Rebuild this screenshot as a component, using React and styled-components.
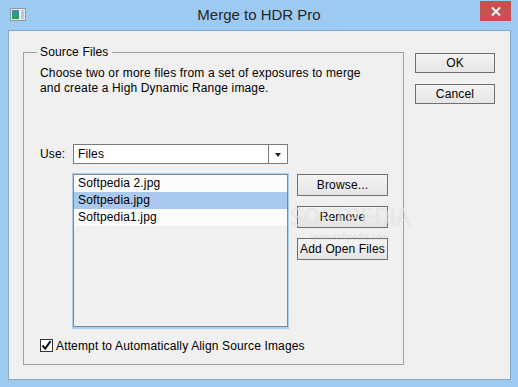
import React from 'react';
import styled, { createGlobalStyle } from 'styled-components';

const Global = createGlobalStyle`
  html, body { margin: 0; padding: 0; }
  body {
    width: 518px; height: 387px; overflow: hidden;
    font-family: "Liberation Sans", Arial, sans-serif;
    font-size: 12px; color: #000; letter-spacing: 0.15px;
  }
`;

const Window = styled.div`
  width: 518px; height: 387px; box-sizing: border-box;
  background: #9ccaf1;
  display: flex; flex-direction: column;
`;

const TitleBar = styled.div`
  height: 30px; flex: 0 0 30px;
  display: grid; grid-template-columns: 1fr auto 1fr; align-items: start;
`;

const AppIcon = styled.div`
  padding: 8px 0 0 10px; display: flex;
`;

const Title = styled.div`
  font-size: 15px; line-height: 30px; color: #262626; letter-spacing: 0;
`;

const CloseBtn = styled.div`
  justify-self: end; margin: 1px 7px 0 0;
  width: 31px; height: 20px; background: #c75050;
  display: flex; align-items: center; justify-content: center;
`;

const Client = styled.div`
  flex: 1; position: relative;
  margin: 0 7px 7px 8px; box-sizing: border-box;
  background: #f0f0f0; border: 1px solid #86a9ca;
  display: flex; gap: 11px;
  padding: 21px 15px 14px 14px;
`;

const GroupBox = styled.div`
  position: relative; box-sizing: border-box;
  flex: 0 0 381px; border: 1px solid #a0a0a0;
  display: flex; flex-direction: column;
  padding: 13px 0 0 16px;
`;

const Legend = styled.div`
  position: absolute; top: -8px; left: 13px;
  padding: 0 3px; background: #f0f0f0; line-height: 15px;
`;

const Description = styled.p`
  margin: 0; line-height: 15px;
`;

const UseRow = styled.div`
  margin-top: 48px; height: 20px;
  display: flex; align-items: center;
`;

const UseLabel = styled.span`
  width: 33px;
`;

const Select = styled.div`
  width: 215px; height: 20px; box-sizing: border-box;
  border: 1px solid #7a7a7a; background: #fff;
  display: flex;
`;

const SelectValue = styled.div`
  flex: 1; padding-left: 4px; line-height: 18px;
`;

const SelectArrow = styled.div`
  width: 18px; border-left: 1px solid #7a7a7a;
  display: flex; align-items: center; justify-content: center;
  &::after {
    content: ""; border-left: 3.5px solid transparent; border-right: 3.5px solid transparent;
    border-top: 4px solid #222; margin-top: 1px;
  }
`;

const ListRow = styled.div`
  margin-top: 10px; padding-left: 33px;
  display: flex; gap: 9px; align-items: flex-start;
`;

const List = styled.div`
  width: 215px; height: 153px; box-sizing: border-box;
  border: 1px solid #828790; background: #f0f0f0;
  box-shadow: 0 0 0 1px #a9cdef, 0 1px 0 1px #a9cdef;
`;

const Row = styled.div`
  height: 17px; line-height: 17px; padding-left: 4px;
  background: ${p => (p.$selected ? '#aac9ef' : '#fbfbfb')};
`;

const ButtonColumn = styled.div`
  display: flex; flex-direction: column; gap: ${p => p.$gap}px;
  margin-top: ${p => p.$top || 0}px;
`;

const Button = styled.div`
  width: ${p => p.$w}px; height: ${p => p.$h}px; box-sizing: border-box;
  border: 1px solid #707070;
  background: linear-gradient(#f3f3f3, #e5e5e5);
  display: flex; align-items: center; justify-content: center;
  font-size: 12px;
`;

const CheckRow = styled.div`
  margin-top: 11px; height: 15px;
  display: flex; align-items: center; gap: 3px;
`;

const CheckBox = styled.div`
  width: 13px; height: 13px; box-sizing: border-box;
  border: 1px solid #333; background: #fff;
  display: flex; align-items: center; justify-content: center;
`;

const Watermark = styled.div`
  position: absolute; left: 270px; top: 173px;
  pointer-events: none; display: flex; flex-direction: column; align-items: center;
`;

const WmBig = styled.div`
  font-size: 25px; line-height: 26px; letter-spacing: 0px;
  color: rgba(255,255,255,0.55);
  text-shadow: 0 0 1px rgba(120,120,120,0.3);
  transform: scaleX(0.85);
`;

const WmSmall = styled.div`
  font-size: 9px; color: rgba(150,150,150,0.25); margin-top: 2px; letter-spacing: 0;
`;

export default function App() {
  return (
    <>
      <Global />
      <Window>
        <TitleBar>
          <AppIcon>
            <svg width="16" height="13" viewBox="0 0 16 13">
              <defs>
                <linearGradient id="ig" x1="0" y1="0" x2="0" y2="1">
                  <stop offset="0" stopColor="#3d8fb0" />
                  <stop offset="1" stopColor="#2f9a4e" />
                </linearGradient>
              </defs>
              <rect x="0.5" y="0.5" width="15" height="12" fill="#dfe6ea" stroke="#8d9aa3" />
              <rect x="2" y="2" width="7" height="9" fill="url(#ig)" />
              <rect x="9" y="2" width="2" height="9" fill="#f4f4f4" />
              <rect x="11" y="2" width="3" height="9" fill="#b9cbd6" />
            </svg>
          </AppIcon>
          <Title>Merge to HDR Pro</Title>
          <CloseBtn>
            <svg width="10" height="9" viewBox="0 0 10 9">
              <path d="M1 0.5 L9 8.5 M9 0.5 L1 8.5" stroke="#fff" strokeWidth="2" />
            </svg>
          </CloseBtn>
        </TitleBar>
        <Client>
          <GroupBox>
            <Legend>Source Files</Legend>
            <Description>
              Choose two or more files from a set of exposures to merge
              <br />
              and create a High Dynamic Range image.
            </Description>
            <UseRow>
              <UseLabel>Use:</UseLabel>
              <Select>
                <SelectValue>Files</SelectValue>
                <SelectArrow />
              </Select>
            </UseRow>
            <ListRow>
              <List>
                <Row>Softpedia 2.jpg</Row>
                <Row $selected>Softpedia.jpg</Row>
                <Row>Softpedia1.jpg</Row>
              </List>
              <ButtonColumn $gap={10}>
                <Button $w={91} $h={22}>Browse...</Button>
                <Button $w={91} $h={22}>Remove</Button>
                <Button $w={91} $h={22}>Add Open Files</Button>
              </ButtonColumn>
            </ListRow>
            <CheckRow>
              <CheckBox>
                <svg width="11" height="11" viewBox="0 0 11 11">
                  <path d="M1.5 5.5 L4.2 8.6 L9.6 1.2" stroke="#111" strokeWidth="2" fill="none" />
                </svg>
              </CheckBox>
              <span>Attempt to Automatically Align Source Images</span>
            </CheckRow>
          </GroupBox>
          <ButtonColumn $gap={11} $top={1}>
            <Button $w={80} $h={20}>OK</Button>
            <Button $w={80} $h={20}>Cancel</Button>
          </ButtonColumn>
          <Watermark>
            <WmBig>SOFTPEDIA</WmBig>
            <WmSmall>www.softpedia.com</WmSmall>
          </Watermark>
        </Client>
      </Window>
    </>
  );
}
